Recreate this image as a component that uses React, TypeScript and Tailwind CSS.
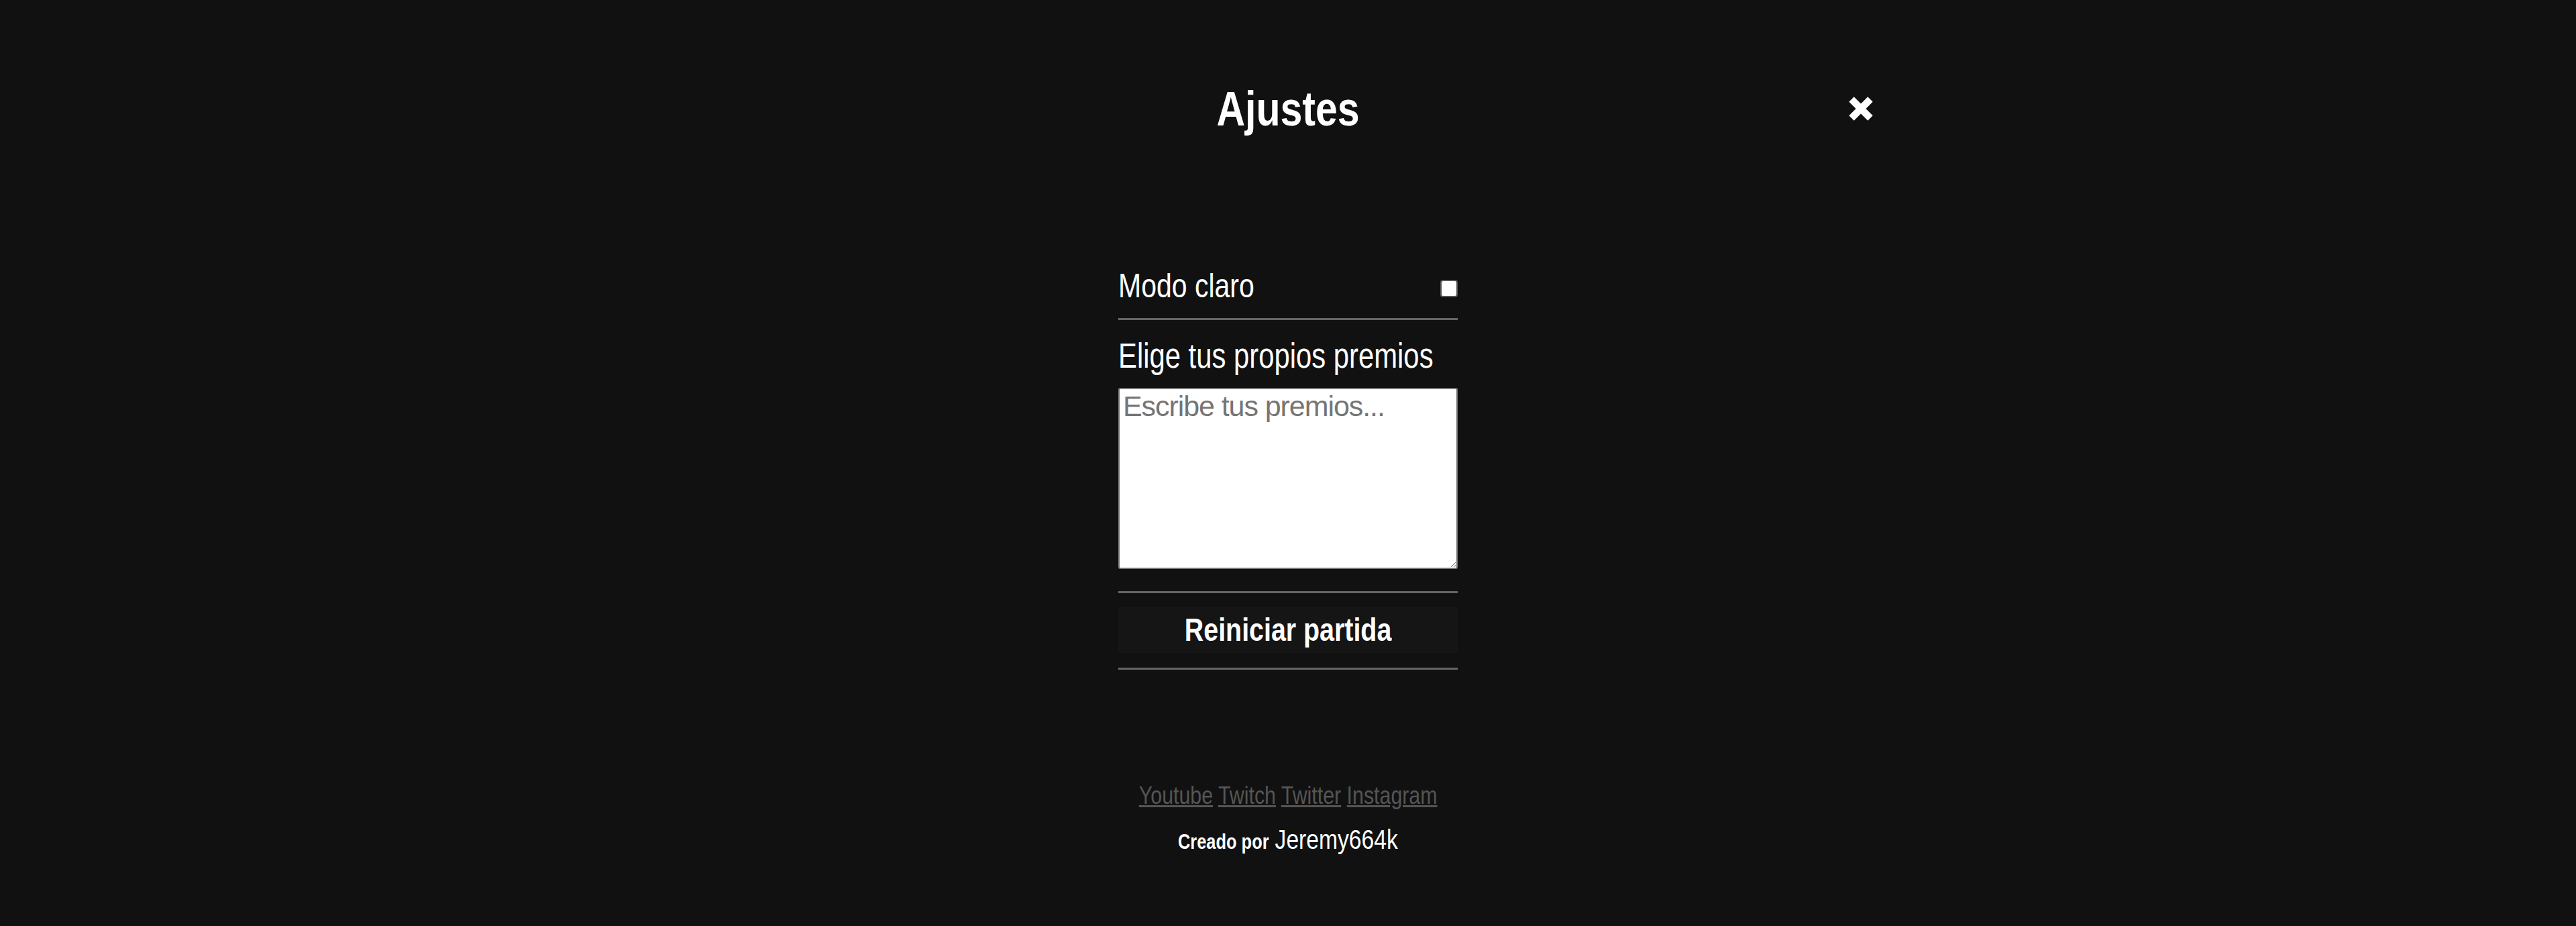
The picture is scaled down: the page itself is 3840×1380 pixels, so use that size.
import { useState } from 'react'

const font = { fontFamily: '"Liberation Sans", Arial, sans-serif' }

function CloseIcon() {
    return (
        <svg width="36" height="36" viewBox="0 0 36 36" className="block">
            <line x1="4" y1="4" x2="32" y2="32" stroke="white" strokeWidth="10.5" />
            <line x1="32" y1="4" x2="4" y2="32" stroke="white" strokeWidth="10.5" />
        </svg>
    )
}

export default function App() {
    const [light, setLight] = useState(false)
    const [prizes, setPrizes] = useState('')

    return (
        <div className="min-h-[1380px] w-full bg-[#111111] text-white" style={font}>
            {/* Header */}
            <div className="mx-auto grid w-[1744px] grid-cols-[1fr_auto_1fr] items-center pt-[126px]">
                <div />
                <h1 className="scale-x-[0.82] whitespace-nowrap text-[72px] font-bold leading-none">Ajustes</h1>
                <div className="flex justify-end">
                    <button className="cursor-pointer">
                        <CloseIcon />
                    </button>
                </div>
            </div>

            {/* Settings */}
            <div className="mx-auto mt-[203px] w-[506px]">
                <div className="flex items-end justify-between border-b-[3px] border-[#666666] pb-[23px]">
                    <span className="inline-block origin-left scale-x-[0.82] whitespace-nowrap text-[50px] leading-none">Modo claro</span>
                    <input
                        type="checkbox"
                        checked={light}
                        onChange={(e) => setLight(e.target.checked)}
                        className="mb-[8px] h-[26px] w-[26px] appearance-none rounded-[4px] border-2 border-[#555555] bg-white"
                    />
                </div>

                <p className="mt-[28px] origin-left scale-x-[0.82] whitespace-nowrap text-[51px] leading-none">
                    Elige tus propios premios
                </p>
                <textarea
                    value={prizes}
                    onChange={(e) => setPrizes(e.target.value)}
                    placeholder="Escribe tus premios..."
                    className="mt-[22px] block h-[270px] w-full rounded-[3px] border-2 border-[#767676] bg-white px-[5px] pt-0 text-[43px] leading-[50px] tracking-[-0.025em] text-black placeholder:text-[#757575]"
                    style={font}
                />

                <div className="mt-[33px] border-y-[3px] border-[#666666] pt-[21px] pb-[22px]">
                    <button className="flex h-[68px] w-full items-center justify-center bg-[#151515] text-white" style={font}>
                        <span className="inline-block scale-x-[0.82] whitespace-nowrap text-[48px] font-bold leading-none">
                            Reiniciar partida
                        </span>
                    </button>
                </div>
            </div>

            {/* Footer */}
            <div className="mt-[169px] flex flex-col items-center">
                <p className="scale-x-[0.82] whitespace-nowrap text-[37px] leading-none text-[#555555]">
                    <a href="#" className="underline">Youtube</a>{' '}
                    <a href="#" className="underline">Twitch</a>{' '}
                    <a href="#" className="underline">Twitter</a>{' '}
                    <a href="#" className="underline">Instagram</a>
                </p>
                <p className="mt-[27px] flex scale-x-[0.82] items-baseline gap-[11px] whitespace-nowrap">
                    <span className="text-[31px] font-bold leading-none">Creado por</span>
                    <span className="text-[41px] leading-none">Jeremy664k</span>
                </p>
            </div>
        </div>
    )
}
